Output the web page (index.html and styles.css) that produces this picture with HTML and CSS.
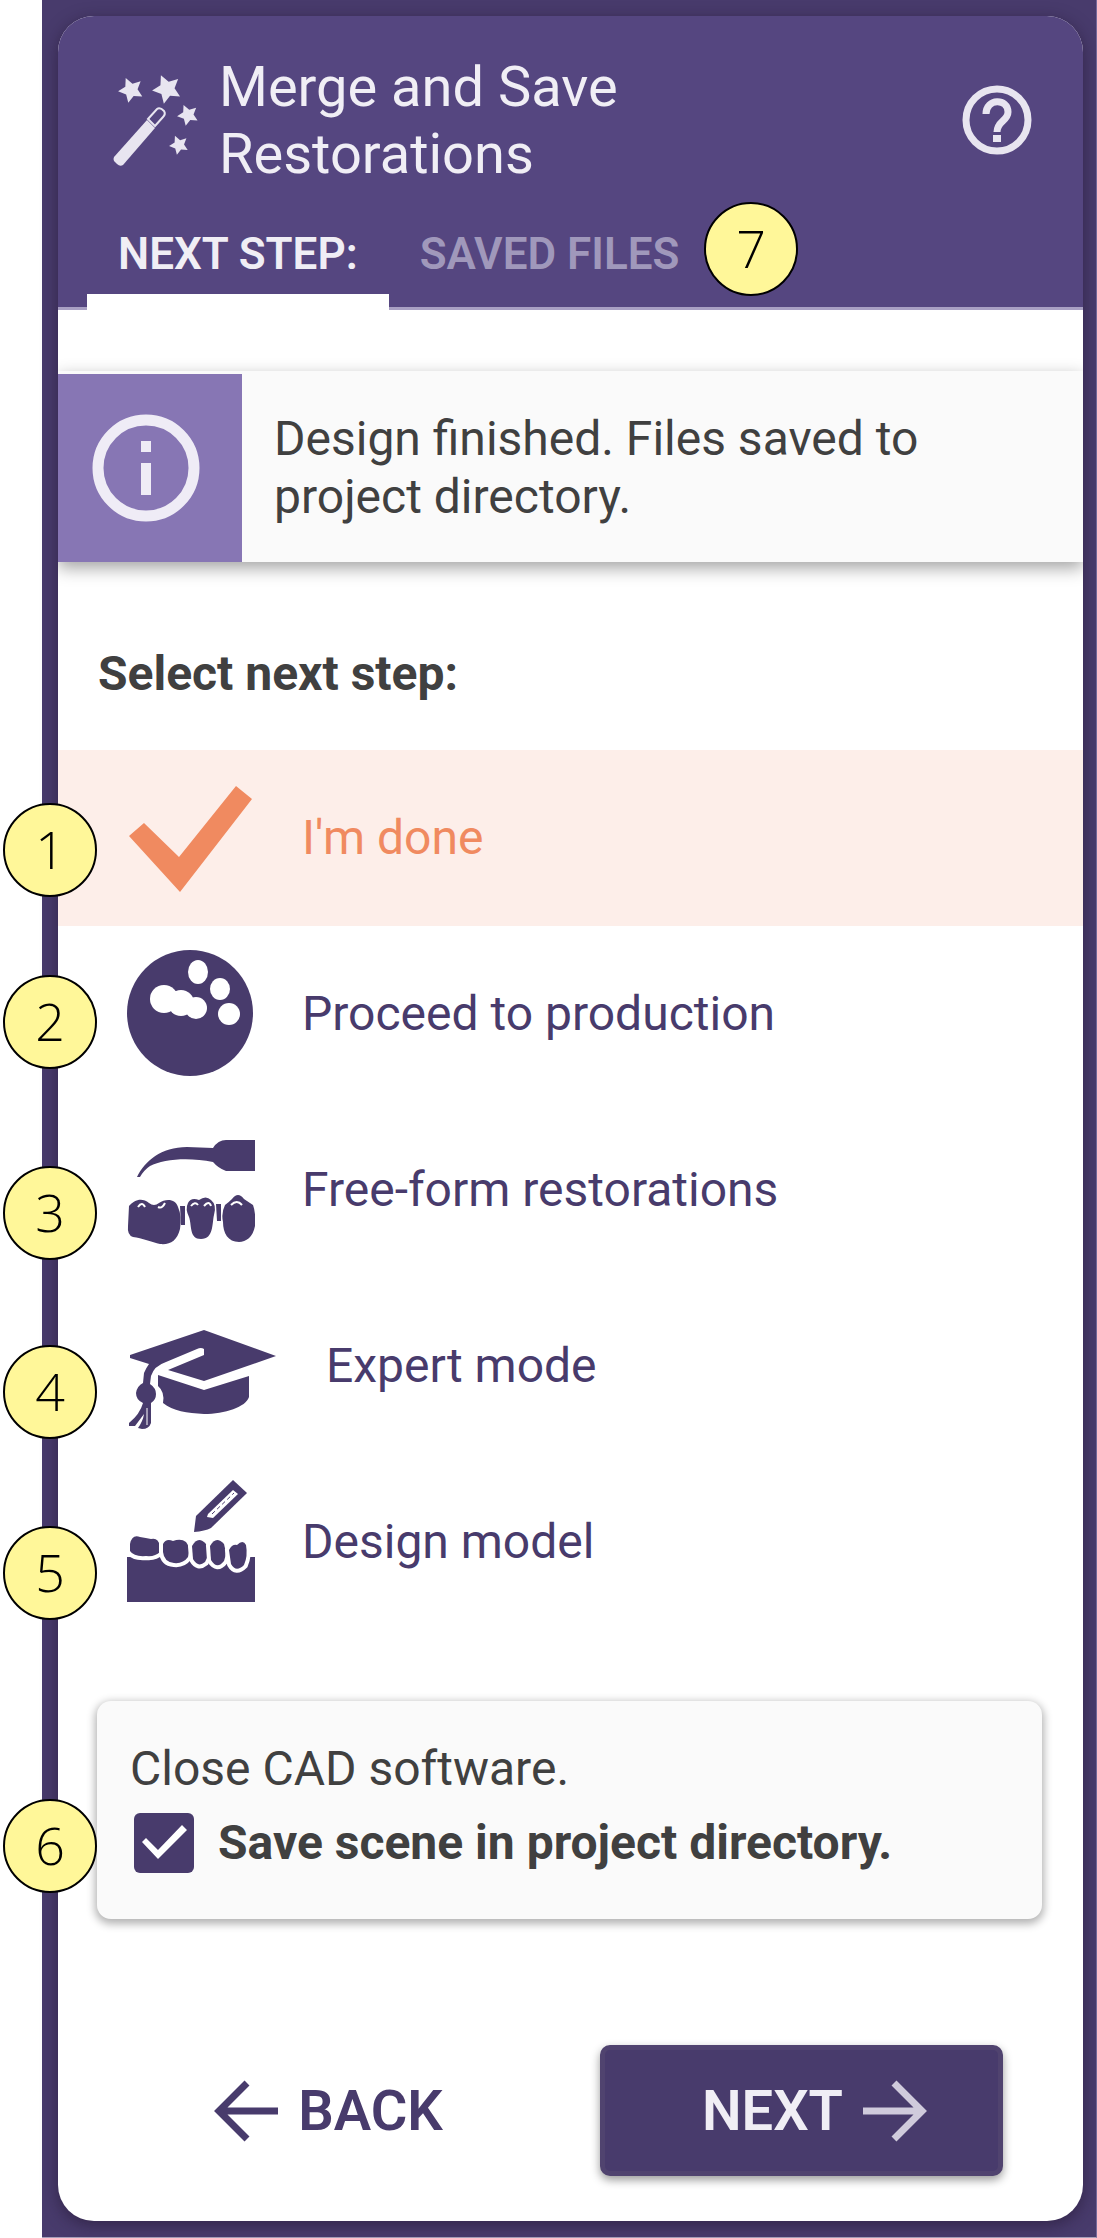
FILE: index.html
```html
<!doctype html>
<html lang="en">
<head>
  <meta charset="UTF-8" />
  <meta name="viewport" content="width=device-width, initial-scale=1.0" />
  <title>Merge and Save Restorations</title>
  <link rel="stylesheet" href="styles.css">
</head>
<body>
  <div class="backdrop">
    <main class="wizard">
      <header class="wizard-header">
        <div class="title-row">
          <svg class="wand-icon" viewBox="0 0 88 92" aria-hidden="true">
            <defs>
              <path id="star" d="M0-10L3-4L9.5-3.1L4.8 1.6L5.9 8.1L0 5L-5.9 8.1L-4.8 1.6L-9.5-3.1L-3-4z" />
            </defs>
            <g fill="currentColor">
              <use href="#star" transform="translate(18 15) rotate(-24) scale(1.3)" />
              <use href="#star" transform="translate(54 14) rotate(-24) scale(1.5)" />
              <use href="#star" transform="translate(75 40) rotate(-24) scale(1.1)" />
              <use href="#star" transform="translate(66 70) rotate(-24) scale(1)" />
              <path d="M1 82L34 45L42 53L10 90Q7 92 4 89L1 86Q0 84 1 82z" />
            </g>
            <path d="M35 44L44 34Q47 32 51 36Q53 39 50 42L42 51z" fill="none" stroke="currentColor" stroke-width="2" />
          </svg>
          <h1>Merge and Save Restorations</h1>
          <button class="help-btn" aria-label="Help">
            <svg viewBox="0 0 70 70" aria-hidden="true">
              <circle cx="35" cy="35" r="31" fill="none" stroke="currentColor" stroke-width="7" />
              <path d="M24 29C24 13 46 13 46 27C46 36 35 36 35 47" fill="none" stroke="currentColor" stroke-width="7" />
              <path d="M31 50h8v7h-8z" fill="currentColor" />
            </svg>
          </button>
        </div>
        <nav class="tabs">
          <button class="tab active">NEXT STEP:</button>
          <button class="tab">SAVED FILES</button>
        </nav>
      </header>

      <div class="message">
        <div class="message-icon">
          <svg viewBox="0 0 108 108" aria-hidden="true">
            <circle cx="54" cy="54" r="48" fill="none" stroke="currentColor" stroke-width="11" />
            <path d="M49 27h10v11h-10zM49 49h10v32h-10z" fill="currentColor" />
          </svg>
        </div>
        <p>Design finished. Files saved to project directory.</p>
      </div>

      <h2>Select next step:</h2>

      <ul class="steps">
        <li>
          <button class="step selected">
            <svg viewBox="0 0 128 128" aria-hidden="true">
              <path d="M2 62L17 49L52 83L109 12L125 25L53 118z" fill="currentColor" />
            </svg>
            <span>I'm done</span>
          </button>
        </li>
        <li>
          <button class="step">
            <svg viewBox="0 0 128 128" aria-hidden="true">
              <circle cx="63" cy="63" r="63" fill="currentColor" />
              <g fill="#fff">
                <ellipse cx="71" cy="22" rx="10" ry="12" />
                <ellipse cx="93" cy="39" rx="10" ry="11" />
                <circle cx="102" cy="64" r="11" />
                <circle cx="37" cy="49" r="14" />
                <path d="M40 41H54V62L40 60z" />
                <circle cx="54" cy="53" r="13" />
                <circle cx="69" cy="58" r="11" />
              </g>
            </svg>
            <span>Proceed to production</span>
          </button>
        </li>
        <li>
          <button class="step">
            <svg viewBox="0 0 128 128" aria-hidden="true">
              <g fill="currentColor">
                <path d="M10 51C18 35 34 21 60 21L86 22Q91 14 99 14H128V45H99Q91 42 86 36C62 31 36 33 23 40Q17 44 13 51z" />
                <path d="M2 80C7 74 15 71 22 77Q27 81 32 77C39 72 49 73 51 81Q55 90 53 103C50 115 43 119 33 118C25 116 15 112 6 111Q0 109 1 100z" />
                <path d="M61 77Q64 71 72 74Q79 69 84 74Q90 79 87 89C85 97 87 113 74 113C62 113 65 99 62 91Q58 83 61 77z" />
                <path d="M98 79Q102 76 105 73Q111 65 117 73L126 79Q129 87 128 100C126 111 119 116 112 116C101 116 96 107 96 96Q94 87 98 79z" />
                <path d="M53 80H58V99H54zM89 78H94V95H90z" />
              </g>
              <path d="M11 81Q15 75 18 81M31 81Q35 83 38 77M64 80Q68 75 71 79M77 80Q82 74 84 80M104 79Q110 73 115 79" fill="none" stroke="#fff" stroke-width="2" />
            </svg>
            <span>Free-form restorations</span>
          </button>
        </li>
        <li>
          <button class="step">
            <svg class="wide" viewBox="0 0 152 128" aria-hidden="true">
              <path d="M3 53L77 28L149 54L77 79L41 68L77 53V47Q74 45 70 47L39 60Q27 64 24 74L23 82Q29 86 29 92Q29 98 24 101V121Q22 127 15 127L11 126Q16 119 17 112L8 124L2 124V121Q13 112 16 101Q9 98 9 91Q10 84 16 81L17 71Q19 66 22 62L3 56z" fill="currentColor" />
              <path d="M31 73L77 88L122 74V95C119 105 98 112 77 112C60 111 46 109 36 101Q38 90 31 84z" fill="currentColor" />
              <path d="M20 106V123" stroke="#fff" stroke-width="1" />
            </svg>
            <span>Expert mode</span>
          </button>
        </li>
        <li>
          <button class="step">
            <svg viewBox="0 0 128 128" aria-hidden="true">
              <path d="M67 54L69 38L106 2L120 15L84 50Q78 53 67 54z" fill="currentColor" />
              <path d="M81 36L106 12L111 16L86 40L80 39z" fill="#fff" />
              <path d="M85 36L107 15" stroke="currentColor" stroke-width="1" stroke-dasharray="4 3" />
              <path d="M0 79H128V124H0z" fill="currentColor" />
              <g fill="currentColor" stroke="#fff" stroke-width="8" paint-order="stroke">
                <path d="M3 66Q5 56 13 59Q19 60 24 61Q31 59 33 68V74Q28 79 19 78Q7 79 3 73z" />
                <path d="M36 66Q39 60 46 63Q54 60 59 64Q64 70 61 79Q56 86 47 85Q37 84 36 74z" />
                <path d="M65 68Q71 57 79 66Q83 76 78 84Q71 90 66 81z" />
                <path d="M83 68Q89 57 97 66Q100 76 97 83Q90 92 84 82z" />
                <path d="M102 72Q105 66 110 67Q116 61 119 67Q121 78 117 87Q109 95 104 86z" />
              </g>
            </svg>
            <span>Design model</span>
          </button>
        </li>
      </ul>

      <section class="card">
        <p>Close CAD software.</p>
        <label class="save-option">
          <input type="checkbox" checked />
          <span>Save scene in project directory.</span>
        </label>
      </section>

      <footer class="actions">
        <button class="back-btn">
          <svg viewBox="0 0 64 62" aria-hidden="true">
            <path d="M64 31H6M33 3L5 31L33 59" fill="none" stroke="currentColor" stroke-width="7" />
          </svg>
          BACK
        </button>
        <button class="next-btn">
          NEXT
          <svg viewBox="0 0 64 62" aria-hidden="true">
            <path d="M0 31H58M31 3L59 31L31 59" fill="none" stroke="currentColor" stroke-width="7" />
          </svg>
        </button>
      </footer>
    </main>
  </div>

  <span class="callout callout-1">1</span>
  <span class="callout callout-2">2</span>
  <span class="callout callout-3">3</span>
  <span class="callout callout-4">4</span>
  <span class="callout callout-5">5</span>
  <span class="callout callout-6">6</span>
  <span class="callout callout-7">7</span>
</body>
</html>
```
FILE: styles.css
```css
:root {
  --primary-color: #483b6c;
  --header-color: #554680;
  --accent-color: #f08a60;
  --text-color: #404040;
  --light-color: #f0eef5;
}

* {
  box-sizing: border-box;
}

body {
  position: relative;
  margin: 0;
  background-color: #fff;
  color: var(--text-color);
  font-family: Roboto, Arial, sans-serif;
  font-size: 48px;
  line-height: 58px;
}

h1,
h2,
p,
ul {
  margin: 0;
  padding: 0;
}

button {
  border: none;
  padding: 0;
  background: none;
  color: inherit;
  font: inherit;
  cursor: pointer;
}

svg {
  display: block;
  flex: none;
}

.backdrop {
  margin-left: 42px;
  padding: 16px 13px 16px 16px;
  background-color: var(--primary-color);
  border-right: 1px solid #75699a;
  border-bottom: 1px solid #a69fba;
}

.wizard {
  padding-bottom: 45px;
  background-color: #fff;
  border-radius: 36px;
  box-shadow: 0 4px 16px rgba(30, 15, 40, 0.5);
}

/* header */
.wizard-header {
  padding-top: 38px;
  background-color: var(--header-color);
  color: var(--light-color);
  border-bottom: 3px solid #a9a0c4;
  border-radius: 36px 36px 0 0;
}

.title-row {
  display: flex;
  align-items: flex-start;
  padding: 0 51px 0 55px;
}

.wand-icon {
  width: 88px;
  height: 92px;
  margin-top: 21px;
  color: #e8e5f0;
}

h1 {
  flex: 1;
  max-width: 500px;
  margin: 0 auto 0 18px;
  font-size: 56px;
  font-weight: 400;
  line-height: 67px;
}

.help-btn {
  margin-top: 31px;
  color: #e8e5f0;
}

.help-btn svg {
  width: 70px;
  height: 70px;
}

.tabs {
  display: flex;
  margin: 0 29px -3px;
}

.tab {
  padding: 36px 31px 10px;
  border-bottom: 16px solid transparent;
  font-size: 44px;
  font-weight: 600;
  line-height: 60px;
  color: #a098bb;
}

.tab.active {
  color: var(--light-color);
  border-bottom-color: #fff;
}

/* info message */
.message {
  display: flex;
  margin-top: 61px;
  padding-top: 3px;
  background-color: #fafafa;
  box-shadow: 0 6px 16px rgba(0, 0, 0, 0.36);
  clip-path: inset(-24px 0 -36px 0);
}

.message-icon {
  flex: none;
  width: 184px;
  padding: 40px 34px;
  background-color: #8776b4;
  color: #efecf6;
}

.message-icon svg {
  width: 108px;
  height: 108px;
}

.message p {
  align-self: center;
  max-width: 720px;
  padding-left: 32px;
}

h2 {
  margin: 83px 40px 47px;
  font-size: 48px;
  font-weight: 700;
  line-height: 58px;
}

/* step list */
.steps {
  list-style: none;
}

.step {
  display: flex;
  align-items: center;
  gap: 47px;
  width: 100%;
  height: 176px;
  padding: 0 69px;
  color: var(--primary-color);
  text-align: left;
}

.step.selected {
  background-color: #fdeee9;
  color: var(--accent-color);
}

.step svg {
  width: 128px;
  height: 128px;
}

.step svg.wide {
  width: 152px;
}

/* closing options */
.card {
  display: grid;
  gap: 14px;
  margin: 71px 41px 0 39px;
  padding: 38px 33px 46px;
  background-color: #fafafa;
  border-radius: 14px;
  box-shadow: 0 3px 8px 2px rgba(0, 0, 0, 0.3);
  line-height: 60px;
}

.save-option {
  display: flex;
  align-items: center;
  gap: 24px;
  font-weight: 700;
}

.save-option input {
  appearance: none;
  width: 60px;
  height: 60px;
  margin: 0 0 0 4px;
  background-color: var(--primary-color);
  border-radius: 6px;
}

.save-option input:checked::before {
  content: "";
  display: block;
  width: 60px;
  height: 60px;
  background-color: #fff;
  clip-path: polygon(8px 29px, 12px 25px, 24px 37px, 48px 12px, 53px 17px, 24px 46px);
}

.actions {
  display: grid;
  grid-template-columns: 1fr 1fr;
  gap: 70px;
  margin-top: 126px;
  padding: 0 80px 0 69px;
  font-size: 56px;
  font-weight: 600;
}

.actions button {
  display: flex;
  align-items: center;
  justify-content: center;
  gap: 20px;
  height: 131px;
  border-radius: 10px;
}

.actions svg {
  width: 64px;
  height: 62px;
}

.back-btn {
  color: var(--primary-color);
}

.actions .next-btn {
  padding-left: 26px;
  background-color: var(--primary-color);
  border: 5px solid #50436f;
  box-shadow: 0 4px 10px rgba(0, 0, 0, 0.4);
  color: var(--light-color);
}

.next-btn svg {
  color: #d0cbdc;
}

/* numbered callouts pinned over the window */
.callout {
  position: absolute;
  left: 3px;
  width: 94px;
  height: 94px;
  border: 2px solid #000;
  border-radius: 50%;
  background-color: #fff799;
  color: #000;
  font-family: "Open Sans", sans-serif;
  font-size: 52px;
  font-weight: 300;
  line-height: 88px;
  text-align: center;
}

.callout-1 {
  top: 803px;
}

.callout-2 {
  top: 975px;
}

.callout-3 {
  top: 1166px;
}

.callout-4 {
  top: 1345px;
}

.callout-5 {
  top: 1526px;
}

.callout-6 {
  top: 1799px;
}

.callout-7 {
  top: 202px;
  left: 704px;
}
```
